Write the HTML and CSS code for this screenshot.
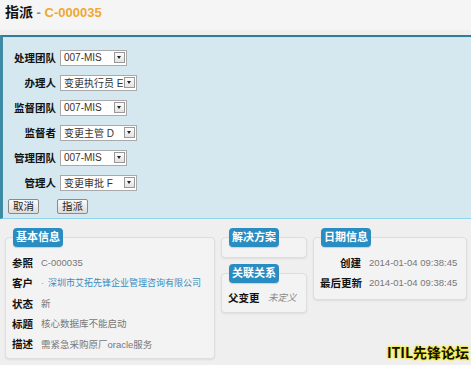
FILE: index.html
```html
<!DOCTYPE html>
<html lang="zh">
<head>
<meta charset="utf-8">
<link rel="stylesheet" href="styles.css">
</head>
<body>
<div class="header"><span class="h-title">指派</span><span class="h-sep"> - </span><span class="h-ref">C-000035</span></div>
<div class="panel">
  <div class="form">
    <div class="row"><span class="lbl">处理团队</span><span class="sel narrow"><span class="val">007-MIS</span><span class="arrow"></span></span></div>
    <div class="row"><span class="lbl">办理人</span><span class="sel wide"><span class="val">变更执行员 E</span><span class="arrow"></span></span></div>
    <div class="row"><span class="lbl">监督团队</span><span class="sel narrow"><span class="val">007-MIS</span><span class="arrow"></span></span></div>
    <div class="row"><span class="lbl">监督者</span><span class="sel wide"><span class="val">变更主管 D</span><span class="arrow"></span></span></div>
    <div class="row"><span class="lbl">管理团队</span><span class="sel narrow"><span class="val">007-MIS</span><span class="arrow"></span></span></div>
    <div class="row"><span class="lbl">管理人</span><span class="sel wide"><span class="val">变更审批 F</span><span class="arrow"></span></span></div>
    <div class="buttons"><span class="btn">取消</span><span class="btn">指派</span></div>
  </div>
</div>
<div class="cols">
  <div class="col col1">
    <div class="box">
      <span class="badge">基本信息</span>
      <div class="info"><span class="k">参照</span><span class="v">C-000035</span></div>
      <div class="info"><span class="k">客户</span><span class="v link"><span class="dot">·</span>深圳市艾拓先锋企业管理咨询有限公司</span></div>
      <div class="info"><span class="k">状态</span><span class="v">新</span></div>
      <div class="info"><span class="k">标题</span><span class="v">核心数据库不能启动</span></div>
      <div class="info"><span class="k">描述</span><span class="v">需紧急采购原厂oracle服务</span></div>
    </div>
  </div>
  <div class="col col2">
    <div class="box small">
      <span class="badge">解决方案</span>
    </div>
    <div class="box rel">
      <span class="badge">关联关系</span>
      <div class="info"><span class="k">父变更</span><span class="v undef">未定义</span></div>
    </div>
  </div>
  <div class="col col3">
    <div class="box dates">
      <span class="badge">日期信息</span>
      <div class="info"><span class="k dk">创建</span><span class="v">2014-01-04 09:38:45</span></div>
      <div class="info"><span class="k dk">最后更新</span><span class="v">2014-01-04 09:38:45</span></div>
    </div>
  </div>
</div>
<div class="watermark">ITIL先锋论坛</div>
</body>
</html>
```
FILE: styles.css
```css
html, body {
  margin: 0;
  padding: 0;
}
body {
  width: 471px;
  height: 365px;
  overflow: hidden;
  background: #efefef;
  font-family: "Liberation Sans", "Noto Sans CJK SC", sans-serif;
  font-size: 11px;
  color: #222;
  position: relative;
}
.header {
  height: 30px;
  background: #f5f5f5;
  padding-left: 5px;
  font-size: 13px;
  font-weight: bold;
  line-height: 24px;
  margin-bottom: 5px;
}
.h-title { color: #111; font-size: 14px; }
.h-sep { color: #888; }
.h-ref { color: #f0a830; }
.panel {
  height: 181px;
  background: #d5e8ef;
  border-top: 2px solid #327d96;
  border-left: 3px solid #3d8aa5;
  border-bottom: 1px solid #8fd3ec;
  box-shadow: inset 0 1px 0 #b4ecfb;
}
.form {
  padding-top: 8px;
  display: flex;
  flex-direction: column;
}
.row {
  height: 25px;
  display: flex;
  align-items: center;
}
.lbl {
  width: 53px;
  text-align: right;
  font-weight: bold;
  color: #111;
  margin-right: 4px;
  font-size: 10.5px;
}
.sel {
  background: #fff;
  border: 1px solid #a9a9a9;
  display: flex;
  align-items: center;
  justify-content: space-between;
  padding-left: 3px;
  box-sizing: border-box;
  height: 16px;
}
.narrow { width: 67px; }
.wide { width: 77px; }
.val {
  color: #333;
  font-size: 10px;
  white-space: nowrap;
}
.arrow {
  flex-shrink: 0;
  width: 11px;
  height: 11px;
  margin-right: 1px;
  border: 1px solid #999;
  background: linear-gradient(#fdfdfd, #e2e2e2);
  box-sizing: border-box;
  position: relative;
}
.arrow::after {
  content: "";
  position: absolute;
  left: 2px;
  top: 3px;
  border-left: 2.5px solid transparent;
  border-right: 2.5px solid transparent;
  border-top: 3px solid #222;
}
.buttons {
  display: flex;
  gap: 18px;
  padding-left: 5px;
  margin-top: 4px;
}
.btn {
  height: 15px;
  line-height: 13px;
  padding: 0 4px;
  border: 1px solid #8a8a8a;
  border-radius: 2px;
  background: linear-gradient(#fafafa, #dcdcdc);
  box-sizing: border-box;
  color: #222;
  font-size: 10.5px;
}
.cols {
  display: flex;
  gap: 6px;
  padding-left: 5px;
  padding-top: 9px;
  align-items: flex-start;
}
.col {
  display: flex;
  flex-direction: column;
}
.col1 { width: 210px; }
.col2 { width: 86px; }
.col3 { width: 154px; }
.box {
  margin-top: 9px;
  border: 1px solid #dedede;
  border-radius: 4px;
  background: #f3f3f3;
  box-shadow: 0 1px 2px rgba(0,0,0,0.08);
  padding: 0 6px 4px 6px;
  display: flex;
  flex-direction: column;
}
.col1 .box { height: 122px; box-sizing: border-box; }
.badge {
  align-self: flex-start;
  margin-top: -10px;
  background: #2a8dc2;
  color: #fff;
  font-weight: bold;
  border-radius: 4px;
  height: 19px;
  line-height: 19px;
  padding: 0 3px;
  margin-bottom: 5px;
  box-shadow: 0 1px 1px rgba(0,0,0,0.15);
  font-size: 11px;
}
.box.small { height: 21px; box-sizing: border-box; }
.box.rel { margin-top: 15px; height: 40px; box-sizing: border-box; }
.info {
  height: 20.5px;
  display: flex;
  align-items: center;
  white-space: nowrap;
}
.k {
  flex-shrink: 0;
  font-weight: bold;
  color: #111;
  width: 29px;
  font-size: 10.5px;
}
.v {
  color: #777;
  white-space: nowrap;
  font-size: 9.5px;
}
.link { color: #3a8cbf; font-size: 9px; }
.dot { color: #999; margin: 0 4px 0 0; }
.rel .info { height: 18px; }
.rel .k { width: 40px; }
.undef { font-style: italic; color: #888; }
.dates { height: 63px; box-sizing: border-box; }
.dates .k.dk { width: 41px; text-align: right; margin-right: 8px; }
.dates .badge { margin-left: 1px; }
.col1 .badge, .col2 .badge { margin-left: 1px; }
.watermark {
  position: absolute;
  right: 2px;
  bottom: 3px;
  font-size: 14px;
  font-weight: bold;
  color: #111;
  text-shadow: 0 0 2px #ffe600, 0 0 2px #ffe600, 0 0 3px #fff200;
  font-family: "Noto Sans CJK SC", sans-serif;
}
```
